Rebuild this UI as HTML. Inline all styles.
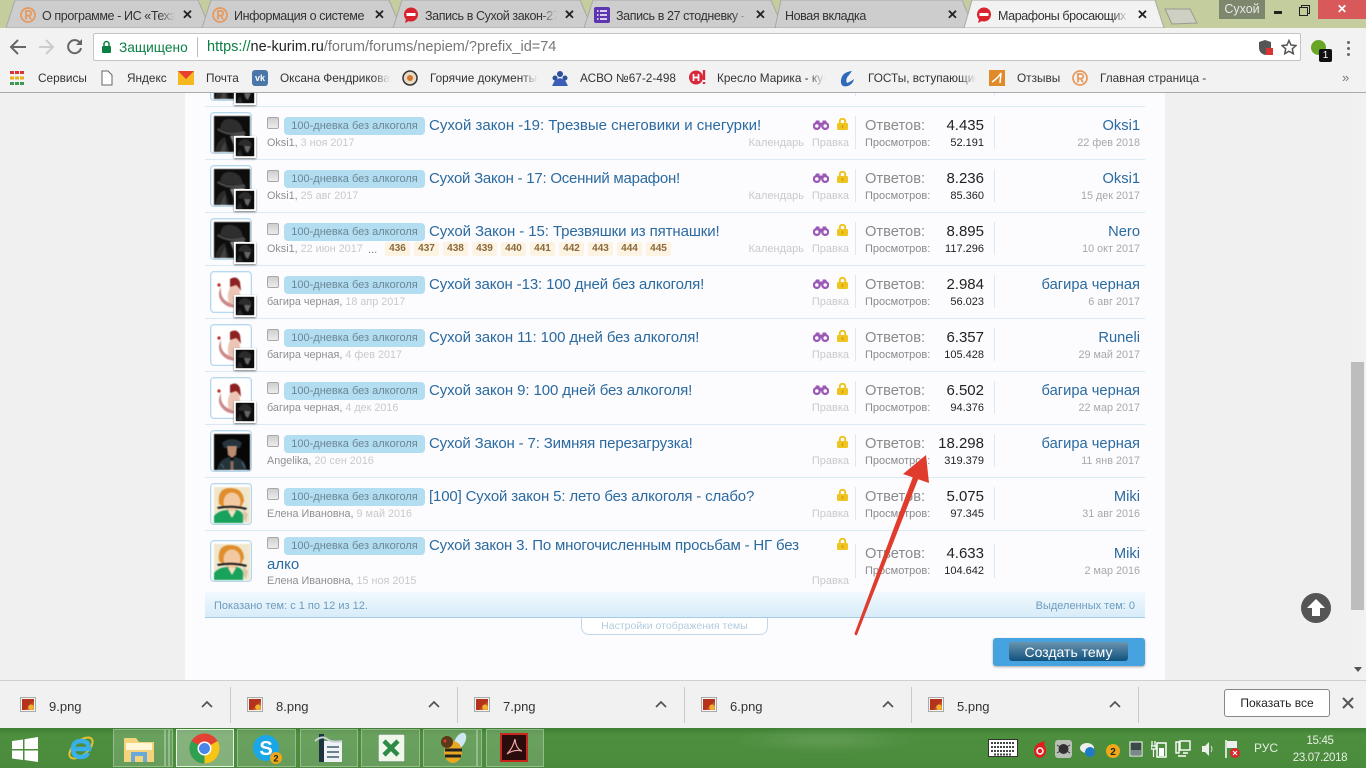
<!DOCTYPE html>
<html lang="ru"><head><meta charset="utf-8"><title>Марафоны бросающих</title>
<style>
html,body{margin:0;padding:0;width:1366px;height:768px;overflow:hidden;background:#f0f0f0;font-family:"Liberation Sans",sans-serif}
div,span,svg{position:absolute;white-space:nowrap}
.tab{top:7px;font-size:12.5px;letter-spacing:-.4px;color:#333;overflow:hidden;height:18px;line-height:18px;-webkit-mask-image:linear-gradient(90deg,#000 88%,transparent)}
.x{top:6px;font-size:13px;font-weight:bold;color:#222;line-height:18px}
.bm{top:70px;font-size:11.8px;color:#333;line-height:16px;overflow:hidden}
.fade{-webkit-mask-image:linear-gradient(90deg,#000 85%,transparent)}
.row{left:205px;width:940px;height:53px;border-bottom:1px solid #d9e9f5}
.av{left:5px;top:6px;width:36px;height:36px;background:#fff;border:1px solid #b5d8ee;border-radius:4px;padding:2px;box-shadow:inset 0 0 0 1px #e4f1f9}
.av svg{left:3px;top:3px;filter:blur(.4px)}
.sm{left:29px;top:30px;width:18px;height:18px;border:2px solid #fff;box-shadow:0 1px 2px #777;background:#111}
.sm svg{left:0;top:0;filter:blur(.5px)}
.cb{left:62px;top:11px;width:10px;height:10px;border:1px solid #a8a8a8;border-radius:2px;background:linear-gradient(#cfcfcf,#ececec)}
.pill{left:79px;top:11px;width:141px;height:18px;background:#b3ddf0;border-radius:4px;font-size:11px;line-height:19px;color:#6b8796;text-align:center}
.t{left:224px;top:10px;font-size:15px;line-height:20px;color:#2b6a9f}
.m{left:62px;top:30px;font-size:10.8px;line-height:15px;color:#8f8f8f}
.m i{font-style:normal;color:#c9c9c9}
.cal{right:341px;top:30px;font-size:11px;line-height:15px;color:#c9c9c9}
.pr{right:296px;top:30px;font-size:11px;line-height:15px;color:#c9c9c9}
.d1{left:650px;top:10px;width:1px;height:33px;background:#d9e9f5}
.d2{left:789px;top:10px;width:1px;height:33px;background:#d9e9f5}
.l1{left:660px;top:10px;font-size:14.7px;line-height:20px;color:#8a8a8a}
.n1{right:161px;top:10px;font-size:15px;line-height:20px;color:#222}
.l2{left:660px;top:30px;font-size:11px;line-height:15px;color:#8a8a8a}
.n2{right:161px;top:30px;font-size:11px;line-height:15px;color:#222}
.po{right:5px;top:10px;font-size:14.7px;line-height:20px;color:#2b6a9f}
.da{right:5px;top:30px;font-size:10.8px;line-height:15px;color:#a8a8a8}
.bi{left:608px;top:14px}.lo{left:632px;top:12px}
.pg{top:242px;height:14px;width:25px;background:#fdf3e3;border-radius:2px;font-size:10px;font-weight:bold;line-height:14px;color:#8a6a3a;text-align:center}
.dl{top:698px;font-size:13px;color:#333;line-height:17px}
.sep{top:687px;width:1px;height:36px;background:#c9c9c9}
.tb{top:729px;height:38px;background:rgba(255,255,255,.16);border:1px solid rgba(255,255,255,.3);box-sizing:border-box}
.dlico{top:698px;width:12px;height:11px;background:radial-gradient(circle at 75% 75%,#f0b030 20%,transparent 25%),linear-gradient(135deg,#b5331c 55%,#e9a33a);border:1px solid #f4f4f4;outline:1px solid #aaa}
</style></head><body>
<svg width="0" height="0" style="position:absolute"><defs>
<linearGradient id="fc" x1="0" y1="0" x2="0" y2="1"><stop offset="0" stop-color="#a0a0a0"/><stop offset="1" stop-color="#3a3a3a"/></linearGradient>
<symbol id="hat" viewBox="0 0 36 36"><rect width="36" height="36" fill="#0d0d0d"/><path d="M6 13Q7 2 17 3T29 15Q18 18 6 13Z" fill="#2e2e2e"/><path d="M4 12Q14 19 30 15L32 18Q16 22 3 14Z" fill="#4a4a4a"/><path d="M16 20 31 19 26 32 20 30Z" fill="url(#fc)"/><path d="M1 36Q3 24 11 21L15 36Z" fill="#2a2a2a"/><path d="M6 36 11 25 12 36Z" fill="#444"/></symbol>
<symbol id="hs" viewBox="0 0 18 18"><rect width="18" height="18" fill="#0d0d0d"/><path d="M2 7Q4 1 9 1t7 6Q9 9 2 7Z" fill="#2c2c2c"/><path d="M8 8 15 8 12 15 9.500 13Z" fill="#666"/><path d="M0 18 4 11 7 18Z" fill="#2a2a2a"/></symbol>
<symbol id="bag" viewBox="0 0 36 36"><rect width="36" height="36" fill="#fff"/><path d="M7 12q-5 9 2 16t18 3q-9-1-15-5T7 12Z" fill="#c88" /><path d="M9 17q-1 7 5 10t12 2q-6-3-11-5-4-3-6-7Z" fill="#fff"/><path d="M17 11q6-4 8 1l2 13q-5 6-12 3-3-9 2-17Z" fill="#ecc5b5"/><path d="M16 4q7-4 10 3l1 9q-3-5-5-6l-6 2Z" fill="#8d2020"/><circle cx="5" cy="10" r="1.6" fill="#b22"/></symbol>
<symbol id="ang" viewBox="0 0 36 36"><rect width="36" height="36" fill="#070707"/><path d="M8 9q10-8 20 0l-2 5H10Z" fill="#26343d"/><path d="M13 12h10l-1 9-4 3-4-3Z" fill="#b98a70"/><path d="M3 36q2-11 12-13l3 4 3-4q10 2 12 13Z" fill="#24333a"/><path d="M16.500 27h3l0 9h-3Z" fill="#8b6c5a"/><path d="M7 30 10 34M28 28 31 34" stroke="#56707c"/></symbol>
<symbol id="ele" viewBox="0 0 36 36"><rect width="36" height="36" fill="#efe6cb"/><path d="M5 17Q3 1 16 1t14 13l-3 6H9Z" fill="#df8e2e"/><ellipse cx="18" cy="15" rx="8.500" ry="9.500" fill="#f3c9a2"/><path d="M3 20Q18 17 33 21L32 23Q18 19 4 22Z" fill="#1c1c1c"/><path d="M0 36V29Q5 23 14 23l4 4 4-4q5 0 7 5v8Z" fill="#19a25c"/><path d="M14 24l4 7 4-7Z" fill="#f4e0c4"/><path d="M29 23l5 4-2 8-3-3Z" fill="#d9c7ac"/></symbol>
<symbol id="binoc" viewBox="0 0 16 10"><circle cx="3.800" cy="6" r="2.900" fill="#fff" stroke="#9b59b6" stroke-width="2.300"/><circle cx="12.200" cy="6" r="2.900" fill="#fff" stroke="#9b59b6" stroke-width="2.300"/><path d="M2 3 3 0.500H6.500V3ZM9.500 .5H13L14 3H9.500ZM6 2.500H10V6H6Z" fill="#9b59b6"/></symbol>
<symbol id="lock" viewBox="0 0 11 12"><path d="M2.800 6V3.400a2.700 2.700 0 0 1 5.400 0V6" fill="none" stroke="#efc41e" stroke-width="2"/><rect x="0" y="5" width="11" height="7" rx="1.500" fill="#efc41e"/><rect x="4.800" y="7" width="1.400" height="3" fill="#c9a012"/></symbol>
<symbol id="r" viewBox="0 0 16 16"><circle cx="8" cy="8" r="7" fill="none" stroke="#e8975a" stroke-width="1.700"/><path d="M6 12.500V4h3a2.300 2.300 0 0 1 0 4.600H6m3 0 2 3.900" fill="none" stroke="#e8975a" stroke-width="1.700"/></symbol>
<symbol id="no" viewBox="0 0 16 16"><path d="M3 12 2 16 6 14Z" fill="#d9232e"/><circle cx="8" cy="7.500" r="7" fill="#d9232e"/><rect x="3.500" y="6" width="9" height="3" fill="#fff"/></symbol>
</defs></svg>

<!-- page -->
<div style="left:0;top:92px;width:1366px;height:588px;background:#f0f0f0"></div>
<div style="left:185px;top:92px;width:980px;height:588px;background:#fcfcff"></div>
<div style="left:1351px;top:92px;width:15px;height:588px;background:#f1f1f1"></div>
<div style="left:1351px;top:362px;width:13px;height:248px;background:#bdbdbd"></div>
<div style="left:1354px;top:667px;width:0;height:0;border:4px solid transparent;border-top:5px solid #555;border-bottom:0"></div>

<!-- partial row -->
<div class="row" style="top:53px"><div class="av"><svg width="36" height="36"><use href="#hat"/></svg></div><div class="sm"><svg width="18" height="18"><use href="#hs"/></svg></div><div class="d1"></div><div class="d2"></div></div>

<div class="row" style="top:106px"><div class="av"><svg width="36" height="36"><use href="#hat"/></svg></div><div class="sm"><svg width="18" height="18"><use href="#hs"/></svg></div><div class="cb"></div><div class="pill">100-дневка без алкоголя</div><div class="t">Сухой закон -19: Трезвые снеговики и снегурки!</div><div class="m">Oksi1, <i>3 ноя 2017</i></div><svg class="bi" width="16" height="10"><use href="#binoc"/></svg><svg class="lo" width="11" height="12"><use href="#lock"/></svg><div class="cal">Календарь</div><div class="pr">Правка</div><div class="d1"></div><div class="l1">Ответов:</div><div class="n1">4.435</div><div class="l2">Просмотров:</div><div class="n2">52.191</div><div class="d2"></div><div class="po">Oksi1</div><div class="da">22 фев 2018</div></div>

<div class="row" style="top:159px"><div class="av"><svg width="36" height="36"><use href="#hat"/></svg></div><div class="sm"><svg width="18" height="18"><use href="#hs"/></svg></div><div class="cb"></div><div class="pill">100-дневка без алкоголя</div><div class="t" style="letter-spacing:-.24px">Сухой Закон - 17: Осенний марафон!</div><div class="m">Oksi1, <i>25 авг 2017</i></div><svg class="bi" width="16" height="10"><use href="#binoc"/></svg><svg class="lo" width="11" height="12"><use href="#lock"/></svg><div class="cal">Календарь</div><div class="pr">Правка</div><div class="d1"></div><div class="l1">Ответов:</div><div class="n1">8.236</div><div class="l2">Просмотров:</div><div class="n2">85.360</div><div class="d2"></div><div class="po">Oksi1</div><div class="da">15 дек 2017</div></div>

<div class="row" style="top:212px"><div class="av"><svg width="36" height="36"><use href="#hat"/></svg></div><div class="sm"><svg width="18" height="18"><use href="#hs"/></svg></div><div class="cb"></div><div class="pill">100-дневка без алкоголя</div><div class="t" style="letter-spacing:-.1px">Сухой Закон - 15: Трезвяшки из пятнашки!</div><div class="m">Oksi1, <i>22 июн 2017</i></div><svg class="bi" width="16" height="10"><use href="#binoc"/></svg><svg class="lo" width="11" height="12"><use href="#lock"/></svg><div class="cal">Календарь</div><div class="pr">Правка</div><div class="d1"></div><div class="l1">Ответов:</div><div class="n1">8.895</div><div class="l2">Просмотров:</div><div class="n2">117.296</div><div class="d2"></div><div class="po">Nero</div><div class="da">10 окт 2017</div></div>
<div style="left:368px;top:243px;font-size:11px;color:#777;line-height:15px">...</div>
<div class="pg" style="left:385px">436</div><div class="pg" style="left:414px">437</div><div class="pg" style="left:443px">438</div><div class="pg" style="left:472px">439</div><div class="pg" style="left:501px">440</div><div class="pg" style="left:530px">441</div><div class="pg" style="left:559px">442</div><div class="pg" style="left:588px">443</div><div class="pg" style="left:617px">444</div><div class="pg" style="left:646px">445</div>

<div class="row" style="top:265px"><div class="av"><svg width="36" height="36"><use href="#bag"/></svg></div><div class="sm"><svg width="18" height="18"><use href="#hs"/></svg></div><div class="cb"></div><div class="pill">100-дневка без алкоголя</div><div class="t" style="letter-spacing:-.13px">Сухой закон -13: 100 дней без алкоголя!</div><div class="m">багира черная, <i>18 апр 2017</i></div><svg class="bi" width="16" height="10"><use href="#binoc"/></svg><svg class="lo" width="11" height="12"><use href="#lock"/></svg><div class="pr">Правка</div><div class="d1"></div><div class="l1">Ответов:</div><div class="n1">2.984</div><div class="l2">Просмотров:</div><div class="n2">56.023</div><div class="d2"></div><div class="po">багира черная</div><div class="da">6 авг 2017</div></div>

<div class="row" style="top:318px"><div class="av"><svg width="36" height="36"><use href="#bag"/></svg></div><div class="sm"><svg width="18" height="18"><use href="#hs"/></svg></div><div class="cb"></div><div class="pill">100-дневка без алкоголя</div><div class="t" style="letter-spacing:-.1px">Сухой закон 11: 100 дней без алкоголя!</div><div class="m">багира черная, <i>4 фев 2017</i></div><svg class="bi" width="16" height="10"><use href="#binoc"/></svg><svg class="lo" width="11" height="12"><use href="#lock"/></svg><div class="pr">Правка</div><div class="d1"></div><div class="l1">Ответов:</div><div class="n1">6.357</div><div class="l2">Просмотров:</div><div class="n2">105.428</div><div class="d2"></div><div class="po">Runeli</div><div class="da">29 май 2017</div></div>

<div class="row" style="top:371px"><div class="av"><svg width="36" height="36"><use href="#bag"/></svg></div><div class="sm"><svg width="18" height="18"><use href="#hs"/></svg></div><div class="cb"></div><div class="pill">100-дневка без алкоголя</div><div class="t" style="letter-spacing:-.1px">Сухой закон 9: 100 дней без алкоголя!</div><div class="m">багира черная, <i>4 дек 2016</i></div><svg class="bi" width="16" height="10"><use href="#binoc"/></svg><svg class="lo" width="11" height="12"><use href="#lock"/></svg><div class="pr">Правка</div><div class="d1"></div><div class="l1">Ответов:</div><div class="n1">6.502</div><div class="l2">Просмотров:</div><div class="n2">94.376</div><div class="d2"></div><div class="po">багира черная</div><div class="da">22 мар 2017</div></div>

<div class="row" style="top:424px"><div class="av"><svg width="36" height="36"><use href="#ang"/></svg></div><div class="cb"></div><div class="pill">100-дневка без алкоголя</div><div class="t" style="letter-spacing:-.15px">Сухой Закон - 7: Зимняя перезагрузка!</div><div class="m">Angelika, <i>20 сен 2016</i></div><svg class="lo" width="11" height="12"><use href="#lock"/></svg><div class="pr">Правка</div><div class="d1"></div><div class="l1">Ответов:</div><div class="n1">18.298</div><div class="l2">Просмотров:</div><div class="n2">319.379</div><div class="d2"></div><div class="po">багира черная</div><div class="da">11 янв 2017</div></div>

<div class="row" style="top:477px"><div class="av"><svg width="36" height="36"><use href="#ele"/></svg></div><div class="cb"></div><div class="pill">100-дневка без алкоголя</div><div class="t" style="letter-spacing:-.15px">[100] Сухой закон 5: лето без алкоголя - слабо?</div><div class="m">Елена Ивановна, <i>9 май 2016</i></div><svg class="lo" width="11" height="12"><use href="#lock"/></svg><div class="pr">Правка</div><div class="d1"></div><div class="l1">Ответов:</div><div class="n1">5.075</div><div class="l2">Просмотров:</div><div class="n2">97.345</div><div class="d2"></div><div class="po">Miki</div><div class="da">31 авг 2016</div></div>

<div class="row" style="top:530px;height:62px;border-bottom:0"><div class="av" style="top:10px"><svg width="36" height="36"><use href="#ele"/></svg></div><div class="cb" style="top:7px"></div><div class="pill" style="top:7px">100-дневка без алкоголя</div><div class="t" style="top:6px;letter-spacing:-.18px">Сухой закон 3. По многочисленным просьбам - НГ без</div><div class="t" style="left:62px;top:25px">алко</div><div class="m" style="top:44px">Елена Ивановна, <i>15 ноя 2015</i></div><svg class="lo" style="top:8px" width="11" height="12"><use href="#lock"/></svg><div class="pr" style="top:44px">Правка</div><div class="d1" style="top:14px;height:34px"></div><div class="l1" style="top:14px">Ответов:</div><div class="n1" style="top:14px">4.633</div><div class="l2" style="top:34px">Просмотров:</div><div class="n2" style="top:34px">104.642</div><div class="d2" style="top:14px;height:34px"></div><div class="po" style="top:14px">Miki</div><div class="da" style="top:34px">2 мар 2016</div></div>

<!-- list footer -->
<div style="left:205px;top:592px;width:940px;height:25px;background:linear-gradient(#f1f9fe,#d8ecf9);border-bottom:1px solid #a5cae4"></div>
<div style="left:214px;top:599px;font-size:11px;line-height:15px;color:#6d9bbd">Показано тем: с 1 по 12 из 12.</div>
<div style="right:231px;top:599px;font-size:11px;line-height:15px;color:#6d9bbd">Выделенных тем: 0</div>
<div style="left:581px;top:618px;width:185px;height:16px;background:#fff;border:1px solid #c0d8e9;border-top:0;border-radius:0 0 8px 8px;font-size:10.5px;line-height:17px;color:#b3cbdd;text-align:center">Настройки отображения темы</div>
<div style="left:993px;top:638px;width:152px;height:28px;background:#47a2e0;border-radius:3px;box-shadow:0 1px 2px #aaa"></div>
<div style="left:1009px;top:642px;width:119px;height:19px;background:linear-gradient(#6a94ae,#10527f);border-radius:3px;color:#fff;font-size:14px;line-height:20px;text-align:center">Создать тему</div>
<div style="left:1301px;top:593px;width:30px;height:30px;border-radius:50%;background:#555"></div>
<svg style="left:1301px;top:593px" width="30" height="30"><path d="M15 6 24 15H19V23H11V15H6Z" fill="#fff"/></svg>

<!-- red arrow -->
<svg style="left:845px;top:445px" width="95" height="200"><path d="M9.500 188.500 69 29 74 32 12 190Q10 191 9.500 188.500Z" fill="#e03c2d"/><path d="M81 10 58 29 84 38Z" fill="#e03c2d"/></svg>

<!-- frame -->
<div style="left:0;top:0;width:1366px;height:28px;background:#c4cd9e"></div>
<svg style="left:0;top:0" width="1366" height="29">
<path d="M6 28 15 0H198L210 28Z" fill="#cdcdcd" stroke="#a8a8a8"/>
<path d="M202 28 211 0H389L401 28Z" fill="#cdcdcd" stroke="#a8a8a8"/>
<path d="M393 28 402 0H580L592 28Z" fill="#cdcdcd" stroke="#a8a8a8"/>
<path d="M584 28 593 0H771L783 28Z" fill="#cdcdcd" stroke="#a8a8a8"/>
<path d="M775 28 781 0H962L974 28Z" fill="#cdcdcd" stroke="#a8a8a8"/>
<path d="M964 28 972 0H1155L1164 28Z" fill="#f2f2f2" stroke="#a8a8a8"/>
<path d="M1165 9H1190L1197 23 1172 24Z" fill="#cfd0c4" stroke="#9a9a90"/>
</svg>
<svg style="left:20px;top:7px" width="16" height="16"><use href="#r"/></svg><div class="tab" style="left:42px;width:133px">О программе - ИС «Техэксперт»</div><div class="x" style="left:182px">✕</div>
<svg style="left:212px;top:7px" width="16" height="16"><use href="#r"/></svg><div class="tab" style="left:234px;width:133px;-webkit-mask-image:none">Информация о системе</div><div class="x" style="left:374px">✕</div>
<svg style="left:403px;top:7px" width="16" height="16"><use href="#no"/></svg><div class="tab" style="left:425px;width:132px">Запись в Сухой закон-27</div><div class="x" style="left:564px">✕</div>
<svg style="left:594px;top:7px;" width="16" height="16"><rect width="16" height="16" rx="2" fill="#5e35b1"/><path d="M3 4h1.500M6 4h7M3 8h1.500M6 8h7M3 12h1.500M6 12h7" stroke="#fff" stroke-width="1.600"/></svg><div class="tab" style="left:616px;width:132px">Запись в 27 стодневку - Сухой</div><div class="x" style="left:755px">✕</div>
<div class="tab" style="left:785px;width:120px;-webkit-mask-image:none">Новая вкладка</div><div class="x" style="left:947px">✕</div>
<svg style="left:976px;top:7px" width="16" height="16"><use href="#no"/></svg><div class="tab" style="left:998px;width:130px">Марафоны бросающих</div><div class="x" style="left:1137px">✕</div>
<div style="left:1219px;top:0;width:46px;height:19px;background:#7d876d;color:#e8e8e8;font-size:12.5px;line-height:19px;text-align:center">Сухой</div>
<div style="left:1274px;top:11px;width:8px;height:3px;background:#222"></div>
<div style="left:1301px;top:5px;width:7px;height:7px;border:1px solid #222"></div><div style="left:1299px;top:7px;width:7px;height:7px;border:1px solid #222;background:#c4cd9e"></div>
<div style="left:1318px;top:0;width:48px;height:19px;background:#d9595a;color:#fff;font-size:12px;line-height:19px;text-align:center;font-weight:bold">✕</div>

<!-- toolbar -->
<div style="left:0;top:28px;width:1366px;height:64px;background:#f2f2f2;border-bottom:1px solid #aaa"></div>
<svg style="left:9px;top:36px" width="80" height="22"><path d="M17 11H3M9 4 2 11l7 7" fill="none" stroke="#666" stroke-width="2"/><path d="M30 11h13M37 4l7 7-7 7" fill="none" stroke="#ccc" stroke-width="2"/><path d="M71 7a6.500 6.500 0 1 0 1 5" fill="none" stroke="#666" stroke-width="2"/><path d="M73 3v6h-6Z" fill="#666"/></svg>
<div style="left:93px;top:33px;width:1206px;height:26px;background:#fff;border:1px solid #c4c4c4;border-radius:2px"></div>
<svg style="left:101px;top:40px" width="11" height="14"><path d="M3 6V4a2.500 2.500 0 0 1 5 0V6" fill="none" stroke="#0b8043" stroke-width="1.500"/><rect x="1" y="6" width="9" height="7" rx="1" fill="#0b8043"/></svg>
<div style="left:119px;top:39px;font-size:13.700px;line-height:17px;color:#0b8043">Защищено</div>
<div style="left:197px;top:37px;width:1px;height:20px;background:#bbb"></div>
<div style="left:207px;top:39px;font-size:14.500px;line-height:17px;color:#777"><span style="position:static;color:#0b8043">https://</span><span style="position:static;color:#222">ne-kurim.ru</span>/forum/forums/nepiem/?prefix_id=74</div>
<svg style="left:1258px;top:39px" width="16" height="18"><path d="M7 1 13 3V9Q13 14 7 16 1 14 1 9V3Z" fill="#555"/><rect x="8" y="9" width="7" height="7" fill="#d33"/></svg>
<svg style="left:1281px;top:39px" width="16" height="16"><path d="M8 1.500 10 6l5 .5-3.700 3.300 1 4.900L8 12.200 3.700 14.700l1-4.900L1 6.500 6 6Z" fill="none" stroke="#555" stroke-width="1.500"/></svg>
<div style="left:1311px;top:40px;width:15px;height:15px;border-radius:50%;background:#6aa626"></div>
<div style="left:1319px;top:49px;width:13px;height:13px;background:#111;color:#fff;font-size:10px;line-height:13px;text-align:center;border-radius:2px">1</div>
<div style="left:1347px;top:41px;width:3px;height:3px;background:#666;box-shadow:0 6px #666,0 12px #666;border-radius:50%"></div>

<!-- bookmarks -->
<svg style="left:10px;top:71px" width="14" height="14"><path d="M0 1.500h4M5 1.500h4M10 1.500h4" stroke="#d33" stroke-width="3"/><path d="M0 7h4M5 7h4M10 7h4" stroke="#e8b020" stroke-width="3"/><path d="M0 12.500h4M5 12.500h4M10 12.500h4" stroke="#3a9a50" stroke-width="3"/></svg>
<div class="bm" style="left:38px">Сервисы</div>
<svg style="left:101px;top:70px" width="12" height="16"><path d="M1 1H7L11 5V15H1Z" fill="#fff" stroke="#666"/></svg>
<div class="bm" style="left:127px">Яндекс</div>
<svg style="left:178px;top:71px" width="16" height="14"><rect width="16" height="14" fill="#f5b820"/><path d="M0 0H16L8 8Z" fill="#e8402e"/></svg>
<div class="bm" style="left:206px">Почта</div>
<div style="left:252px;top:70px;width:16px;height:16px;background:#4a76a8;border-radius:3px;color:#fff;font-size:9px;font-weight:bold;line-height:16px;text-align:center">vk</div>
<div class="bm fade" style="left:280px;width:110px">Оксана Фендрикова</div>
<svg style="left:402px;top:70px" width="16" height="16"><circle cx="8" cy="8" r="7" fill="#e8dcc8" stroke="#333" stroke-width="1.500"/><circle cx="8" cy="8" r="3" fill="#d8752e"/></svg>
<div class="bm fade" style="left:430px;width:108px">Горячие документы</div>
<svg style="left:552px;top:70px" width="16" height="16"><circle cx="8" cy="4" r="3" fill="#2e4fa0"/><circle cx="3" cy="8" r="2.500" fill="#2e4fa0"/><circle cx="13" cy="8" r="2.500" fill="#2e4fa0"/><path d="M0 16 3 10 8 8 13 10 16 16Z" fill="#3a5fb8"/></svg>
<div class="bm" style="left:580px">АСВО №67-2-498</div>
<svg style="left:689px;top:69px" width="18" height="17"><circle cx="7" cy="8.500" r="7" fill="#d8283a"/><path d="M4.500 5v7M9.500 5v7M4.500 8.500h5" stroke="#fff" stroke-width="1.700"/><path d="M15 1v10M15 13v2" stroke="#d8283a" stroke-width="2.400"/></svg>
<div class="bm fade" style="left:717px;width:108px">Кресло Марика - куп</div>
<svg style="left:839px;top:69px" width="17" height="18"><path d="M13 2Q3 3 2 11t7 6q5-2 6-7-4 3-7 4-2-4 2-8Z" fill="#2f6ab8"/></svg>
<div class="bm fade" style="left:868px;width:108px">ГОСТы, вступающие</div>
<svg style="left:989px;top:70px" width="16" height="16"><rect width="16" height="16" fill="#e08a2a"/><path d="M3 12Q9 8 12 3L11 13" fill="none" stroke="#fff" stroke-width="1.500"/></svg>
<div class="bm" style="left:1017px">Отзывы</div>
<svg style="left:1072px;top:70px" width="16" height="16"><use href="#r"/></svg>
<div class="bm" style="left:1100px">Главная страница -</div>
<div class="bm" style="left:1342px;color:#777;font-size:13px">»</div>

<!-- downloads -->
<div style="left:0;top:680px;width:1366px;height:48px;background:#f1f1f1;border-top:1px solid #d0d0d0;box-sizing:border-box"></div>
<div class="dlico" style="left:21px"></div><div class="dl" style="left:49px">9.png</div>
<div class="dlico" style="left:248px"></div><div class="dl" style="left:276px">8.png</div>
<div class="dlico" style="left:475px"></div><div class="dl" style="left:503px">7.png</div>
<div class="dlico" style="left:702px"></div><div class="dl" style="left:730px">6.png</div>
<div class="dlico" style="left:929px"></div><div class="dl" style="left:957px">5.png</div>
<svg style="left:0;top:698px" width="1150" height="12"><path d="M202 9 207 4 212 9M429 9 434 4 439 9M656 9 661 4 666 9M883 9 888 4 893 9M1110 9 1115 4 1120 9" fill="none" stroke="#555" stroke-width="1.700"/></svg>
<div class="sep" style="left:230px"></div><div class="sep" style="left:457px"></div><div class="sep" style="left:684px"></div><div class="sep" style="left:911px"></div><div class="sep" style="left:1138px"></div>
<div style="left:1224px;top:689px;width:104px;height:26px;background:#fff;border:1px solid #888;border-radius:3px;font-size:12px;line-height:26px;text-align:center;color:#222">Показать все</div>
<svg style="left:1342px;top:697px" width="12" height="12"><path d="M1 1 11 11M11 1 1 11" stroke="#555" stroke-width="2"/></svg>

<!-- taskbar -->
<div style="left:0;top:728px;width:1366px;height:40px;background:radial-gradient(ellipse 90px 14px at 825px 12px,rgba(130,175,115,.4),transparent),linear-gradient(#3f7f34,#4d8f3f 18%,#4a8a3c)"></div>
<svg style="left:12px;top:737px" width="26" height="25"><path d="M0 4 11 2.500V12H0ZM12.500 2.300 26 0V12H12.500ZM0 13.500H11V23L0 21.500ZM12.500 13.500H26V25L12.500 23Z" fill="#fff"/></svg>
<svg style="left:66px;top:733px" width="30" height="30"><ellipse cx="15" cy="15" rx="14" ry="7" transform="rotate(-40 15 15)" fill="none" stroke="#e8c030" stroke-width="2"/><path d="M8 16H23Q23 8 15 8T7 16Q7 24 15 24 20 24 22 20" fill="none" stroke="#39b1e8" stroke-width="4.500"/></svg>
<div class="tb" style="left:113px;width:52px"></div><div class="tb" style="left:165px;width:4px"></div><div class="tb" style="left:169px;width:4px"></div>
<svg style="left:123px;top:734px" width="32" height="30"><path d="M1 4H13L16 8H31V28H1Z" fill="#f3d47a"/><rect x="3" y="9" width="26" height="7" fill="#fff6d8"/><path d="M8 28V18H24V28H20V22H12V28Z" fill="#69a8d8"/></svg>
<div class="tb" style="left:176px;width:58px;background:rgba(255,255,255,.32);border-color:#e6f2e0"></div>
<svg style="left:189px;top:733px" width="31" height="31"><circle cx="15.500" cy="15.500" r="15" fill="#e34133"/><path d="M15.500 15.500 28.500 8A15 15 0 0 1 15.500 30.500Z" fill="#f5c518"/><path d="M15.500 15.500 15.500 30.500A15 15 0 0 1 2.500 8Z" fill="#2fa04f"/><circle cx="15.500" cy="15.500" r="7" fill="#fff"/><circle cx="15.500" cy="15.500" r="5.500" fill="#4a86e8"/></svg>
<div class="tb" style="left:237px;width:59px"></div>
<svg style="left:252px;top:733px" width="32" height="32"><circle cx="14" cy="15" r="13" fill="#1ba6e8"/><text x="14" y="22" font-family="Liberation Sans" font-size="20" font-weight="bold" fill="#fff" text-anchor="middle">S</text><circle cx="24" cy="25" r="6" fill="#f0a818"/><text x="24" y="28.500" font-family="Liberation Sans" font-size="9" font-weight="bold" fill="#222" text-anchor="middle">2</text></svg>
<div class="tb" style="left:300px;width:58px"></div>
<svg style="left:314px;top:733px" width="30" height="30"><rect x="5" y="1" width="5" height="28" fill="#1d3440"/><rect x="10" y="8" width="18" height="21" fill="#eef2f5"/><path d="M13 14H25M13 19H25M13 24H25" stroke="#6a7f8f" stroke-width="2"/><path d="M1 8Q8 2 13 6T28 8" fill="none" stroke="#c8d0d8" stroke-width="2"/></svg>
<div class="tb" style="left:361px;width:59px"></div>
<svg style="left:378px;top:734px" width="27" height="28"><rect width="27" height="28" fill="#eef7ea" stroke="#2d6a37"/><path d="M6 7 20 21M20 7 6 21" stroke="#2e8b47" stroke-width="4.500"/></svg>
<div class="tb" style="left:423px;width:54px"></div><div class="tb" style="left:477px;width:5px"></div>
<svg style="left:436px;top:731px" width="34" height="34"><ellipse cx="24" cy="10" rx="5" ry="9" transform="rotate(30 24 10)" fill="#cfe6f5"/><ellipse cx="17" cy="21" rx="9" ry="11" fill="#e8a820"/><path d="M9 19H26M9 25H25" stroke="#222" stroke-width="3"/><circle cx="11" cy="11" r="6" fill="#5a3a1a"/><circle cx="9" cy="10" r="1.500" fill="#e33"/></svg>
<div class="tb" style="left:486px;width:58px"></div>
<svg style="left:500px;top:733px" width="28" height="29"><rect x="1" y="1" width="26" height="27" fill="#2a0c0c" stroke="#c8281e" stroke-width="2"/><path d="M7 21Q13 15 15 6 16 16 22 18 14 16 7 21Z" fill="none" stroke="#eaa" stroke-width="1.200"/></svg>

<!-- tray -->
<svg style="left:988px;top:739px" width="30" height="18"><rect x=".5" y=".5" width="29" height="17" fill="#fff" stroke="#333"/><path d="M3 4h24M3 8h24M3 12h24M6 15.500h18" stroke="#444" stroke-width="2" stroke-dasharray="2 1"/></svg>
<svg style="left:1032px;top:740px" width="16" height="18"><path d="M2 10Q3 3 13 1 11 5 14 8 15 16 8 18 2 17 2 10Z" fill="#e11d1d"/><circle cx="8" cy="11" r="3" fill="none" stroke="#fff" stroke-width="1.500"/></svg>
<svg style="left:1055px;top:740px" width="17" height="18"><rect width="17" height="18" rx="3" fill="#b8c0b8"/><circle cx="8.500" cy="9" r="5" fill="#333"/><path d="M2 5 15 13M15 5 2 13" stroke="#333"/></svg>
<svg style="left:1079px;top:742px" width="18" height="16"><ellipse cx="8" cy="6" rx="7" ry="5" fill="#eee"/><circle cx="11" cy="10" r="5" fill="#1e7bc8"/></svg>
<svg style="left:1105px;top:740px" width="16" height="19"><circle cx="8" cy="11" r="7" fill="#f0a818"/><path d="M4 4Q8 0 12 3" stroke="#3a9a30" stroke-width="3" fill="none"/><text x="8" y="15" font-family="Liberation Sans" font-size="10" font-weight="bold" fill="#222" text-anchor="middle">2</text></svg>
<svg style="left:1129px;top:741px" width="14" height="16"><rect x="1" y="1" width="12" height="14" fill="#3a4a48" stroke="#fff"/><rect x="2" y="9" width="10" height="5" fill="#7a8a88"/></svg>
<svg style="left:1151px;top:740px" width="16" height="18"><rect x="6" y="3" width="9" height="14" fill="none" stroke="#fff" stroke-width="1.500"/><rect x="8" y="8" width="5" height="8" fill="#fff"/><path d="M1 1V6M4 1V6M0 6H5V9H0ZM2.500 9V17" stroke="#fff" stroke-width="1.200" fill="none"/></svg>
<svg style="left:1175px;top:740px" width="16" height="18"><rect x="5" y="1" width="10" height="9" fill="none" stroke="#fff" stroke-width="1.400"/><rect x="1" y="2" width="3" height="11" fill="none" stroke="#fff" stroke-width="1.400"/><path d="M8 13H13M3 16H11" stroke="#fff" stroke-width="1.400"/></svg>
<svg style="left:1201px;top:741px" width="14" height="16"><path d="M1 5H4L8 1V15L4 11H1Z" fill="#eee"/><path d="M10 5Q12 8 10 11" stroke="#ddd" fill="none"/></svg>
<svg style="left:1224px;top:739px" width="18" height="20"><path d="M2 1V19" stroke="#fff" stroke-width="1.500"/><path d="M3 2H13V9H3Z" fill="#eee"/><circle cx="11" cy="14" r="5" fill="#d8282e"/><path d="M9 12 13 16M13 12 9 16" stroke="#fff"/></svg>
<div style="left:1254px;top:740px;font-size:12px;line-height:16px;color:#e4eee0">РУС</div>
<div style="left:1290px;top:733px;width:60px;font-size:11.500px;line-height:16px;color:#e8f0e4;text-align:center;letter-spacing:-.3px">15:45</div>
<div style="left:1282px;top:750px;width:76px;font-size:11.500px;line-height:16px;color:#e8f0e4;text-align:center;letter-spacing:-.3px">23.07.2018</div>
</body></html>
